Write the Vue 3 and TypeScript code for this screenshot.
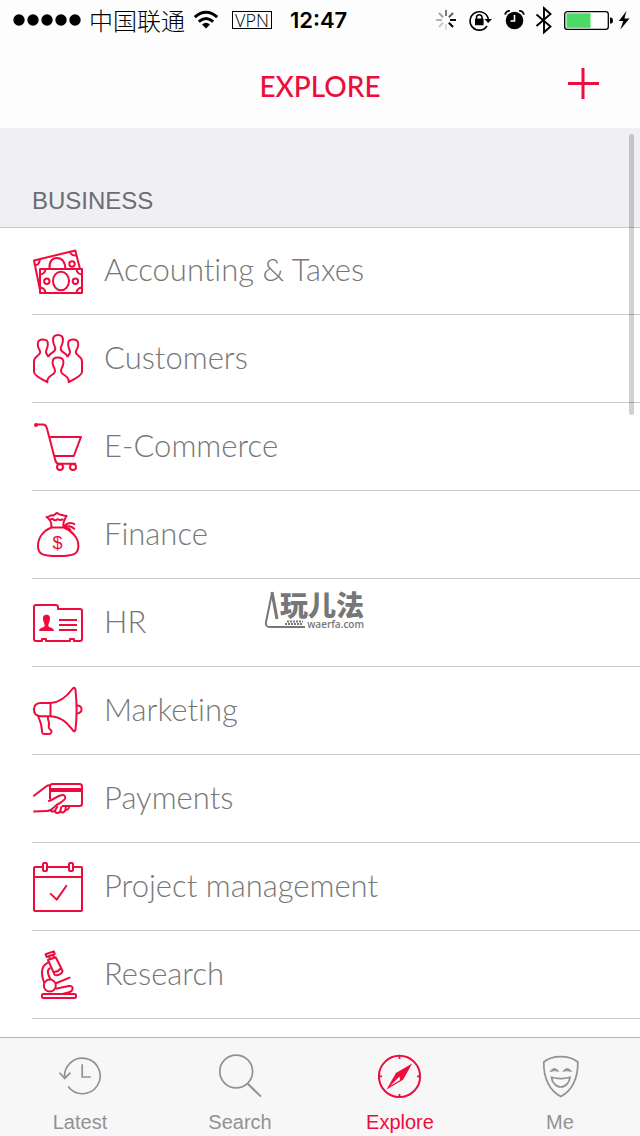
<script setup lang="ts">
interface Category {
  name: string
  icon: string
}

interface Tab {
  name: string
  active: boolean
}

const categories: Category[] = [
  { name: 'Accounting & Taxes', icon: 'money' },
  { name: 'Customers', icon: 'people' },
  { name: 'E-Commerce', icon: 'cart' },
  { name: 'Finance', icon: 'bag' },
  { name: 'HR', icon: 'card' },
  { name: 'Marketing', icon: 'megaphone' },
  { name: 'Payments', icon: 'payment' },
  { name: 'Project management', icon: 'calendar' },
  { name: 'Research', icon: 'microscope' },
]

const tabs: Tab[] = [
  { name: 'Latest', active: false },
  { name: 'Search', active: false },
  { name: 'Explore', active: true },
  { name: 'Me', active: false },
]

const spokes: number[] = [0.5, 0.62, 0.95, 1, 0.12, 0.2, 0.28, 0.35]
</script>

<template>
  <div class="screen">
    <header class="top">
      <div class="status">
        <div class="status-left">
          <svg class="dots" width="70" height="14" viewBox="0 0 70 14" aria-hidden="true">
            <circle v-for="n in 5" :key="n" :cx="n * 14 - 7" cy="7" r="5.7" />
          </svg>
          <span class="carrier">中国联通</span>
          <svg class="wifi" width="26" height="20" viewBox="0 0 26 20" aria-hidden="true">
            <g fill="none" stroke="#000" stroke-width="3">
              <path d="M1.8 7.2Q13-2.6 24.2 7.2" />
              <path d="M5.8 11.6Q13 5.4 20.2 11.6" />
            </g>
            <path d="M9 14.4Q13 11 17 14.4L13 18.6Z" />
          </svg>
          <span class="vpn">VPN</span>
          <span class="time">12:47</span>
        </div>
        <svg class="status-right" width="200" height="30" viewBox="0 0 200 30" aria-hidden="true">
          <g stroke="#000" stroke-width="2">
            <line
              v-for="(o, i) in spokes"
              :key="i"
              x1="12"
              y1="5"
              x2="12"
              y2="11"
              :opacity="o"
              :transform="`rotate(${i * 45} 12 15)`"
            />
          </g>
          <path d="M53 21A9.2 9.2 0 1 1 54.3 14" fill="none" stroke="#000" stroke-width="1.6" />
          <path d="M50.5 14H58L54.2 18Z" />
          <rect x="41" y="13.5" width="8.6" height="6.8" rx="0.6" />
          <path d="M42.5 14V12A2.8 2.8 0 0 1 48 12V14" fill="none" stroke="#000" stroke-width="1.5" />
          <circle cx="80.5" cy="15.5" r="8.8" />
          <path d="M71.2 9.8A4 4 0 0 1 75.8 6M85.2 6A4 4 0 0 1 89.8 9.8" fill="none" stroke="#000" stroke-width="1.8" />
          <path d="M80.5 10V16H76.5" fill="none" stroke="#fff" stroke-width="1.6" />
          <path d="M102.5 9.5L116.5 21.5L110 27.3V3.2L116.5 9L102.5 21" fill="none" stroke="#000" stroke-width="1.9" />
          <rect x="130.7" y="6.7" width="43.6" height="17.6" rx="2.6" fill="#fff" stroke="#000" stroke-width="1.3" />
          <rect x="132.5" y="8.3" width="24" height="14.5" fill="#4cd964" />
          <path d="M176 12.5H177Q179 13 179 15.5T177 18.5H176Z" />
          <path d="M192.5 6L184.8 16H189.2L186.4 24.5L195.5 13.4H190.4Z" />
        </svg>
      </div>
      <div class="nav">
        <h1>EXPLORE</h1>
        <button class="add" type="button" aria-label="Add">
          <svg width="32" height="32" viewBox="0 0 32 32" aria-hidden="true">
            <path d="M16 0V31M1 15.5H32" stroke="#ee0c3c" stroke-width="3" />
          </svg>
        </button>
      </div>
    </header>

    <main class="content">
      <h2>BUSINESS</h2>
      <ul>
        <li v-for="c in categories" :key="c.name">
          <a href="#">
            <svg class="icon" width="53" height="53" viewBox="0 0 53 53" aria-hidden="true">
              <template v-if="c.icon === 'money'">
                <rect x="8" y="25" width="42" height="24" />
                <ellipse cx="29" cy="37" rx="8" ry="9.3" />
                <circle cx="14.8" cy="37.3" r="2.7" />
                <circle cx="43.4" cy="37.3" r="2.7" />
                <path d="M8 30.5Q13 30 13.5 25M44.5 25Q45 30 50 30.5M8 43.5Q13 44 13.5 49M44.5 49Q45 44 50 43.5" />
                <path d="M8 46L2 16.5L43.3 6.5L48 25" />
                <path d="M17.5 25C17 17.5 20 14 25 14S33 18 33.5 25" />
                <circle cx="40" cy="20" r="2.7" />
                <path d="M3 21.5Q8 20.5 7.7 15.2M38 8Q39.5 12 44.6 11.5" />
              </template>
              <template v-else-if="c.icon === 'people'">
                <path d="M16.5 25C15.6 22.8 14 22.3 14 20C14 17.8 15.4 17 15.8 13C16.3 9 14.5 7.6 11 7.6S5.4 9 5.8 13C6 17 8 17.5 8.2 20C8.5 24 2 23.5 2 29.5V40C2 42.5 9 47 15.3 50.2C14.5 43 22.5 43.5 23 39.5C23.3 36 21 36 20.6 31C20.2 27 22.5 25.6 26 25.6S31.8 27 31.4 31C31 36 28.7 36 29 39.5C29.5 43.5 37.5 43 36.7 50.2C43 47 50 42.5 50 40V29.5C50 23.5 43.5 24 43.8 20C44 17.5 46 17 46.2 13C46.6 9 44.5 7.6 41 7.6S35.7 9 36.2 13C36.6 17 38 17.8 38 20C38 22.3 36.4 22.8 35.5 25" />
                <path d="M16.5 25C16.5 20.5 23.6 21 23.3 16.5C23.1 13.5 21.4 13.5 21.1 8.5C20.8 4.5 22.7 3 26 3S31.2 4.5 30.9 8.5C30.6 13.5 28.9 13.5 28.7 16.5C28.4 21 35.5 20.5 35.5 25" />
              </template>
              <template v-else-if="c.icon === 'cart'">
                <path d="M3.5 4.6H11C13.5 4.6 14.3 6 14.9 8.2L23.3 40.2C24 43 25 43.8 27 43.8H44M18 16.9H49L41.8 36H22.6" />
                <circle cx="28" cy="47" r="3" fill="#fff" />
                <circle cx="41" cy="47" r="3" fill="#fff" />
                <circle cx="4" cy="5" r="1" class="solid" />
              </template>
              <template v-else-if="c.icon === 'bag'">
                <path d="M19.5 19.5C11 23 6 30 6 38C6 45.5 9 48 26 48S46.4 45.5 46.4 38C46.4 30 40 22.5 31.8 19.5Z" />
                <path d="M19.5 19.5C19.7 15.5 18.5 11.5 14.5 9C17.5 9.2 18.5 6.2 21 7.5C23 7 24 4.5 25.8 5.2C27.3 7.5 29.2 6 31 7.2C32.5 8.3 33.5 7.4 34.6 8C32.5 11 30.5 14.5 31.6 19.5" />
                <path d="M17 12C19.5 11 20.2 10 22 12C24 13.3 24.5 10.6 26.5 11.5C28.5 13 29.5 10.8 31.5 11.8" />
                <path d="M32 18.2C35 15 39 14 43 16.3M32 19.5C36 17.5 40 18 42.8 21.5M34 20C36 20 38 21 38.7 22.5" />
                <text x="25.4" y="40.6" text-anchor="middle">$</text>
              </template>
              <template v-else-if="c.icon === 'card'">
                <path d="M4 9H23.5Q26 9 26 11V13H48Q50 13 50 15V43Q50 45 48 45H42V43H38V45H14V43H10V45H4Q2 45 2 43V11Q2 9 4 9Z" />
                <path d="M27 24H45M27 29H45M27 34H45" />
                <path class="solid" d="M14.5 18.8C18 18.8 18.4 21.5 17.8 24C17.3 27 16.3 28 16.3 29.5C16.8 32.3 21.5 31 22 35H7C7.5 31 12.2 32.3 12.7 29.5C12.7 28 11.7 27 11.2 24C10.6 21.5 11 18.8 14.5 18.8Z" stroke="none" />
              </template>
              <template v-else-if="c.icon === 'megaphone'">
                <path d="M18.5 19H9C4.5 19 2 21.2 2 25.5S4.5 32.2 9 32.2H18.5ZM18.5 19C29 18.8 36 11 40.8 4.5C42 3 43.2 4 43.5 6C44.8 18 44.8 34 43.5 45.5C43.2 47.3 42 48 40.8 46.2C35 38.5 29 32.8 18.5 32.2" />
                <path d="M44.6 21.5C51.2 21 51.2 30 44.6 29.4" />
                <path d="M6.2 32L9 40L10.2 48.4Q10.6 50 12.5 50H17.2Q20.2 49.5 19.2 46.4C16.8 45 16.2 43 17 40.4C17.3 37.5 15.8 36.5 15.8 32.4" />
              </template>
              <template v-else-if="c.icon === 'payment'">
                <path d="M18 27.5V14.5Q18 12 20.5 12H47.5Q50 12 50 14.5V31.5Q50 34 47.5 34H30" />
                <path class="solid" d="M18 16H50V20H18Z" stroke="none" />
                <path d="M1.3 24.2L14 14.5Q15.5 13.3 18 13.3M1.3 39.6L15 39C20 39 21.5 35 24.5 33C28.5 31 33.3 28.5 33.3 25.6C33.3 22.8 31 22.5 27.5 23.8C23.5 25.2 20.5 28 16.2 29.2" />
                <path d="M18.5 37.5C19.2 40.6 22.6 39.8 23.5 37.8L25.5 34M22.8 38.8C23.5 42 27.6 41.6 28.4 38.5L29.5 34.3M28.2 39.5C30 41.7 33 40 33.5 37.5L34 34.3M33.3 37.8C35.5 38.5 37.2 36.5 37.4 34" />
              </template>
              <template v-else-if="c.icon === 'calendar'">
                <path d="M10.5 7H3Q2 7 2 8V50Q2 51 3 51H49Q50 51 50 50V8Q50 7 49 7H41.5M15 7H36.5M2 17H50" />
                <rect x="11" y="3" width="4" height="8" rx="1" fill="#fff" />
                <rect x="37" y="3" width="4" height="8" rx="1" fill="#fff" />
                <path d="M18.2 33.4L24.7 39.6L34.8 25.2" />
              </template>
              <template v-else>
                <rect x="10" y="46" width="34" height="4" rx="1.2" />
                <path d="M13.6 6.3L21.8 3.4L22.8 6L14.6 9ZM17 8.5L18.3 11.2M21 7L22.2 9.8M16 12L23.7 9.2L30.5 22.8C30.5 25.6 25.8 28 22.7 26.9ZM21.6 23.6Q26 24.7 28.5 20.3" />
                <path d="M16.4 14.3C9 17.5 8.6 25 12.2 34.8M18.4 19.8C14.5 21.8 15.4 26 18.8 31.7M23.3 35.5L38.3 29.4M23.4 40.8L37 37.9C42.2 37.5 41.5 43 37 44.2L30.5 46" />
                <circle cx="17.8" cy="37.6" r="6" />
              </template>
            </svg>
            <span>{{ c.name }}</span>
          </a>
        </li>
      </ul>
      <div class="scrollbar"></div>
    </main>

    <nav class="tabs">
      <a v-for="t in tabs" :key="t.name" href="#" :class="{ active: t.active }">
        <svg width="44" height="44" viewBox="0 0 44 44" aria-hidden="true">
          <template v-if="t.name === 'Latest'">
            <path d="M6.7 24.2A17.8 17.8 0 1 1 10.1 32.6M1.5 18.7L6.7 24.4L12.4 18.7M24.2 10.3V23H32.8" />
          </template>
          <template v-else-if="t.name === 'Search'">
            <circle cx="18.2" cy="17.5" r="16.4" />
            <path d="M29.5 29.5L43 42.6" stroke-width="2" />
          </template>
          <template v-else-if="t.name === 'Explore'">
            <circle cx="21.5" cy="22.4" r="20.6" stroke-width="2" />
            <path d="M21.5 2V5M21.5 40V43M1 22.4H4M39 22.4H42" />
            <path d="M32.5 11.2L24.6 25.4L10.3 33.8L18.4 19.4Z" stroke-width="1.3" />
            <path d="M32.5 11.2L24.6 25.4L18.4 19.4ZM18.4 19.4L21.5 22.4L10.3 33.8ZM21.5 22.4L24.6 25.4L22 26.5Z" fill="currentColor" stroke="none" />
          </template>
          <template v-else>
            <path d="M5.8 8C14 .8 31.5.8 39.8 8C40.2 24 34 36.8 22.8 42.5C11.5 36.8 5.4 24 5.8 8Z" />
            <path d="M13.5 23.3Q22.8 26 32 23.3C31.5 28 28 33 22.8 33S14 28 13.5 23.3Z" />
            <path d="M12 17.5Q16.5 11.5 20.8 17.3Q16.5 16 12 17.5ZM25 17.3Q29.2 11.5 33.7 17.5Q29.2 16 25 17.3Z" fill="currentColor" stroke-width="0.8" />
          </template>
        </svg>
        <span>{{ t.name }}</span>
      </a>
    </nav>

    <div class="watermark">
      <svg width="44" height="40" viewBox="0 0 44 40" aria-hidden="true">
        <path d="M8 3L2 32Q1 37 6 37H41" fill="none" stroke="#777" stroke-width="2" />
        <path d="M8 2L13 29" stroke="#777" stroke-width="3" />
        <path d="M21 34H39M23 31.5H39" stroke="#777" stroke-width="2" stroke-dasharray="2 1" />
      </svg>
      <div class="mark-text">
        <strong>玩儿法</strong>
        <small>waerfa.com</small>
      </div>
    </div>
  </div>
</template>

<style>
body {
  margin: 0;
}
</style>

<style scoped>
.screen {
  position: relative;
  display: flex;
  flex-direction: column;
  height: 100vh;
  overflow: hidden;
  background: #fff;
  font-family: Lato, "Liberation Sans", sans-serif;
}

.top {
  flex: none;
  background: #fdfdfd;
}

.status {
  display: flex;
  justify-content: space-between;
  height: 40px;
  padding: 0 6px 0 12px;
}

.status-left {
  display: flex;
  align-items: center;
}

.status-right {
  margin-top: 5px;
}

.carrier {
  margin-left: 7px;
  font-family: "Noto Sans CJK SC", sans-serif;
  font-size: 24px;
  font-weight: 300;
  line-height: 40px;
}

.wifi {
  margin-left: 8px;
}

.vpn {
  margin-left: 13px;
  padding: 0 2px;
  border: 1px solid #000;
  font-family: "Open Sans", sans-serif;
  font-size: 18px;
  font-weight: 300;
  line-height: 16px;
}

.time {
  margin-left: 18px;
  font-family: Inter, "Liberation Sans", sans-serif;
  font-size: 22px;
  font-weight: 600;
}

.nav {
  display: grid;
  grid-template-columns: 1fr auto 1fr;
  align-items: center;
  height: 88px;
  padding: 0 41px;
}

h1 {
  grid-column: 2;
  margin: 4px 0 0;
  color: #ee0c3c;
  font-size: 28px;
  font-weight: 500;
  line-height: 36px;
}

.add {
  justify-self: end;
  width: 32px;
  height: 32px;
  padding: 0;
  border: 0;
  background: none;
}

.add svg {
  display: block;
}

.content {
  position: relative;
  flex: 1;
  min-height: 0;
  overflow: hidden;
}

h2 {
  margin: 0;
  padding: 57px 32px 10px;
  background: #efeff4;
  box-shadow: 0 1px #c8c7cc;
  color: #6d6d72;
  font-family: "Liberation Sans", sans-serif;
  font-size: 24px;
  font-weight: 400;
  line-height: 32px;
}

ul {
  margin: 0;
  padding: 0 0 0 32px;
  list-style: none;
}

li {
  border-bottom: 1px solid #c8c7cc;
}

li a {
  display: flex;
  align-items: center;
  gap: 19px;
  height: 87px;
  color: #777;
  font-size: 31px;
  font-variant-ligatures: none;
  font-weight: 300;
  text-decoration: none;
}

li a span {
  padding-bottom: 3px;
}

.icon {
  flex: none;
  fill: none;
  stroke: #ee0c3c;
  stroke-width: 2;
  stroke-linejoin: round;
}

.icon .solid {
  fill: #ee0c3c;
}

.icon text {
  fill: #ee0c3c;
  stroke: none;
  font-family: "Liberation Sans", sans-serif;
  font-size: 18px;
}

.scrollbar {
  position: absolute;
  top: 6px;
  right: 6px;
  width: 5px;
  height: 281px;
  border-radius: 3px;
  background: rgba(0, 0, 0, 0.18);
}

.tabs {
  display: grid;
  grid-template-columns: repeat(4, 1fr);
  flex: none;
  height: 98px;
  border-top: 1px solid #b2b2b2;
  background: #f7f7f7;
}

.tabs a {
  display: flex;
  flex-direction: column;
  align-items: center;
  padding-top: 16px;
  color: #929292;
  font-family: "Liberation Sans", sans-serif;
  font-size: 20px;
  line-height: 24px;
  text-decoration: none;
}

.tabs .active {
  color: #ee0c3c;
}

.tabs svg {
  margin-bottom: 12px;
  fill: none;
  stroke: currentColor;
  stroke-width: 1.7;
}

.watermark {
  position: absolute;
  top: 590px;
  left: 264px;
  display: flex;
  color: #777;
  pointer-events: none;
}

.mark-text {
  display: flex;
  flex-direction: column;
  margin-left: -28px;
}

.mark-text strong {
  font-family: "Noto Sans CJK SC", sans-serif;
  font-size: 28px;
  font-weight: 900;
  line-height: 28px;
}

.mark-text small {
  align-self: flex-end;
  font-family: "Open Sans", sans-serif;
  font-size: 10px;
  font-weight: 600;
  line-height: 12px;
}
</style>
